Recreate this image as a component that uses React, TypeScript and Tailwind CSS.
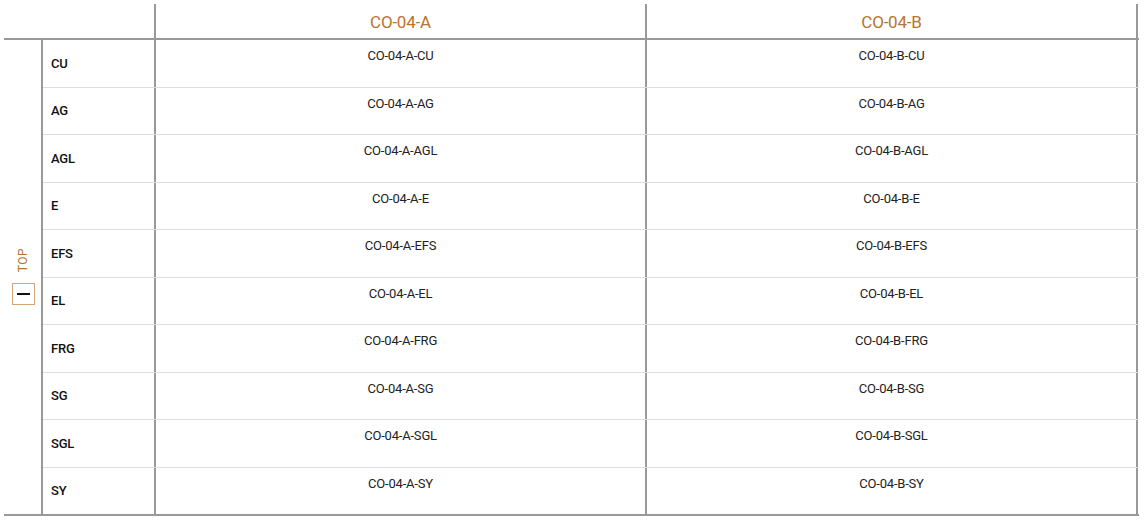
import React from "react";

const rows = ["CU", "AG", "AGL", "E", "EFS", "EL", "FRG", "SG", "SGL", "SY"];
const cols = ["CO-04-A", "CO-04-B"];

export default function App() {
  return (
    <div className="w-[1146px] h-[523px] bg-white pt-[4px] pl-[4px] font-['Roboto',sans-serif]">
      <div className="w-[1135px]">
        {/* header */}
        <div className="flex h-[36px] border-b-2 border-[#999]">
          <div className="w-[152px] border-r-2 border-[#999]" />
          {cols.map((c) => (
            <div
              key={c}
              className="w-[491px] border-r-2 border-[#999] flex items-center justify-center pt-[4px] text-[17px] text-[#b8732f] tracking-[-0.2px]"
            >
              {c}
            </div>
          ))}
        </div>

        {/* body */}
        <div className="flex h-[476px] border-b-2 border-[#999]">
          <div className="w-[37px] flex flex-col items-center justify-center gap-[10px] pt-[4px] pl-[1px]">
            <span className="-rotate-90 text-[12px] text-[#b8732f] tracking-[0.5px] leading-none">TOP</span>
            <div className="mt-[7px] w-[23px] h-[22px] border-[1.5px] border-[#d4a57a] flex items-center justify-center">
              <div className="w-[13px] h-[2px] bg-[#111]" />
            </div>
          </div>
          <div className="flex-1 flex flex-col border-l-2 border-[#999]">
            {rows.map((r, i) => (
              <div
                key={r}
                className={`flex-1 flex ${i < rows.length - 1 ? "border-b border-[#ddd]" : ""}`}
              >
                <div className="w-[113px] border-r-2 border-[#999] flex items-center pl-[8px] text-[13px] text-[#111] font-medium tracking-[-0.2px]">
                  {r}
                </div>
                {cols.map((c) => (
                  <div
                    key={c}
                    className="w-[491px] border-r-2 border-[#999] flex justify-center pt-[6px] text-[13px] text-[#222] tracking-[-0.2px]"
                  >
                    {c}-{r}
                  </div>
                ))}
              </div>
            ))}
          </div>
        </div>
      </div>
    </div>
  );
}
